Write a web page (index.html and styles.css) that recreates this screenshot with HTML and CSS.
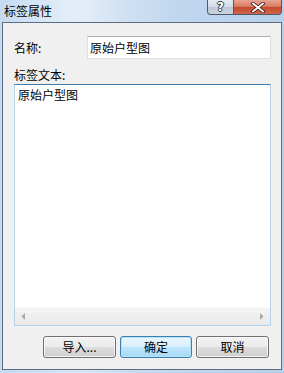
FILE: index.html
```html
<!DOCTYPE html>
<html lang="zh-CN">
<head>
<meta charset="UTF-8">
<title>标签属性</title>
<link rel="stylesheet" href="styles.css">
</head>
<body>
<div class="window">
    <div class="titlebar">
        <span class="title">标签属性</span>
        <div class="caption">
            <div class="cbtn help">?</div>
            <div class="cbtn close">
                <svg width="16" height="11" viewBox="0 0 16 11">
                    <path d="M3 1.5 L13 9.5 M13 1.5 L3 9.5" stroke="#3a1a14" stroke-width="3.4" stroke-linecap="square"/>
                    <path d="M3 1.5 L13 9.5 M13 1.5 L3 9.5" stroke="#ffffff" stroke-width="1.8" stroke-linecap="square"/>
                </svg>
            </div>
        </div>
    </div>
    <div class="client">
        <div class="name-row">
            <label class="name-label">名称:</label>
            <div class="textbox">原始户型图</div>
        </div>
        <div class="text-label">标签文本:</div>
        <div class="memo">
            <div class="memo-text">原始户型图</div>
            <div class="hscroll">
                <svg width="5" height="7" viewBox="0 0 5 7"><path d="M4 0 L4 7 L0.5 3.5 Z" fill="#a8a8a8"/></svg>
                <svg width="5" height="7" viewBox="0 0 5 7"><path d="M1 0 L1 7 L4.5 3.5 Z" fill="#a8a8a8"/></svg>
            </div>
        </div>
        <div class="buttons">
            <div class="btn btn-import">导入...</div>
            <div class="btn btn-ok">确定</div>
            <div class="btn btn-cancel">取消</div>
        </div>
    </div>
</div>
</body>
</html>
```

FILE: styles.css
```css
body {
    margin: 0;
    font-family: "Noto Sans CJK SC", "Liberation Sans", sans-serif;
    font-size: 12px;
    color: #000;
}
.window {
    width: 284px;
    height: 373px;
    display: flex;
    flex-direction: column;
    background: linear-gradient(90deg, #c4dbf1 0%, #d7e6f5 30%, #c9dcf0 45%, #bdd5ee 70%, #b7d0ea 100%);
}
.titlebar {
    height: 22px;
    display: flex;
    justify-content: space-between;
    align-items: flex-start;
    background: linear-gradient(90deg, rgba(255,255,255,0) 0%, rgba(255,255,255,0.35) 25%, rgba(255,255,255,0.15) 40%, rgba(255,255,255,0) 60%);
}
.title {
    margin: 3px 0 0 4px;
    line-height: 16px;
    font-size: 12px;
}
.caption {
    display: flex;
    margin-right: 2px;
}
.cbtn {
    height: 14px;
    border: 1px solid #4c5a6e;
    border-top: none;
    display: flex;
    align-items: center;
    justify-content: center;
}
.help {
    width: 25px;
    border-radius: 0 0 0 4px;
    background: linear-gradient(#e6ecf3 0%, #d2dbe6 50%, #bcc8d6 51%, #c9d4e1 100%);
    color: #fff;
    font-family: "DejaVu Sans", sans-serif;
    font-weight: bold;
    font-size: 12px;
    line-height: 14px;
    text-shadow: -1px 0 #2e3a4a, 1px 0 #2e3a4a, 0 -1px #2e3a4a, 0 1px #2e3a4a;
}
.close {
    width: 47px;
    border-left: none;
    border-radius: 0 0 4px 0;
    background: linear-gradient(#e8a593 0%, #d87860 48%, #c44a2e 52%, #d2664a 100%);
}
.client {
    flex: 1;
    margin: 0 2px 3px 2px;
    border: 1px solid #5d6c80;
    background: #f0f0f0;
    padding: 13px 10px 11px 11px;
    display: flex;
    flex-direction: column;
}
.name-row {
    display: flex;
    align-items: center;
    height: 23px;
}
.name-label {
    width: 73px;
}
.textbox {
    width: 182px;
    height: 21px;
    line-height: 21px;
    padding: 0 0 0 2px;
    box-sizing: content-box;
    width: 180px;
    border: 1px solid #dbdfe6;
    border-top-color: #abadb3;
    background: #fff;
    margin-left: 0;
}
.text-label {
    margin: 8px 0 1px 0;
    line-height: 16px;
}
.memo {
    height: 240px;
    border: 1px solid #b5d2ea;
    border-top-color: #3d7bad;
    background: #fff;
    display: flex;
    flex-direction: column;
    justify-content: space-between;
}
.memo-text {
    padding: 2px 3px;
    line-height: 16px;
}
.hscroll {
    height: 17px;
    background: linear-gradient(#f4f4f4, #e9e9e9);
    border-top: 1px solid #f8f8f8;
    display: flex;
    align-items: center;
    justify-content: space-between;
    padding: 0 6px;
}
.buttons {
    margin-top: 10px;
    display: flex;
    justify-content: flex-end;
    gap: 4px;
    padding-right: 2px;
}
.btn {
    height: 20px;
    width: 71px;
    border: 1px solid #707070;
    border-radius: 3px;
    background: linear-gradient(#f2f2f2 0%, #ebebeb 49%, #dddddd 50%, #cfcfcf 100%);
    box-shadow: inset 0 0 0 1px rgba(255,255,255,0.7);
    display: flex;
    align-items: center;
    justify-content: center;
    line-height: 20px;
}
.btn-ok {
    width: 70px;
    border-color: #3c7fb1;
    background: linear-gradient(#eaf6fd 0%, #d9f0fc 49%, #bee6fd 50%, #a7d9f5 100%);
    box-shadow: inset 0 0 0 1px #b4e3fb;
}
```
